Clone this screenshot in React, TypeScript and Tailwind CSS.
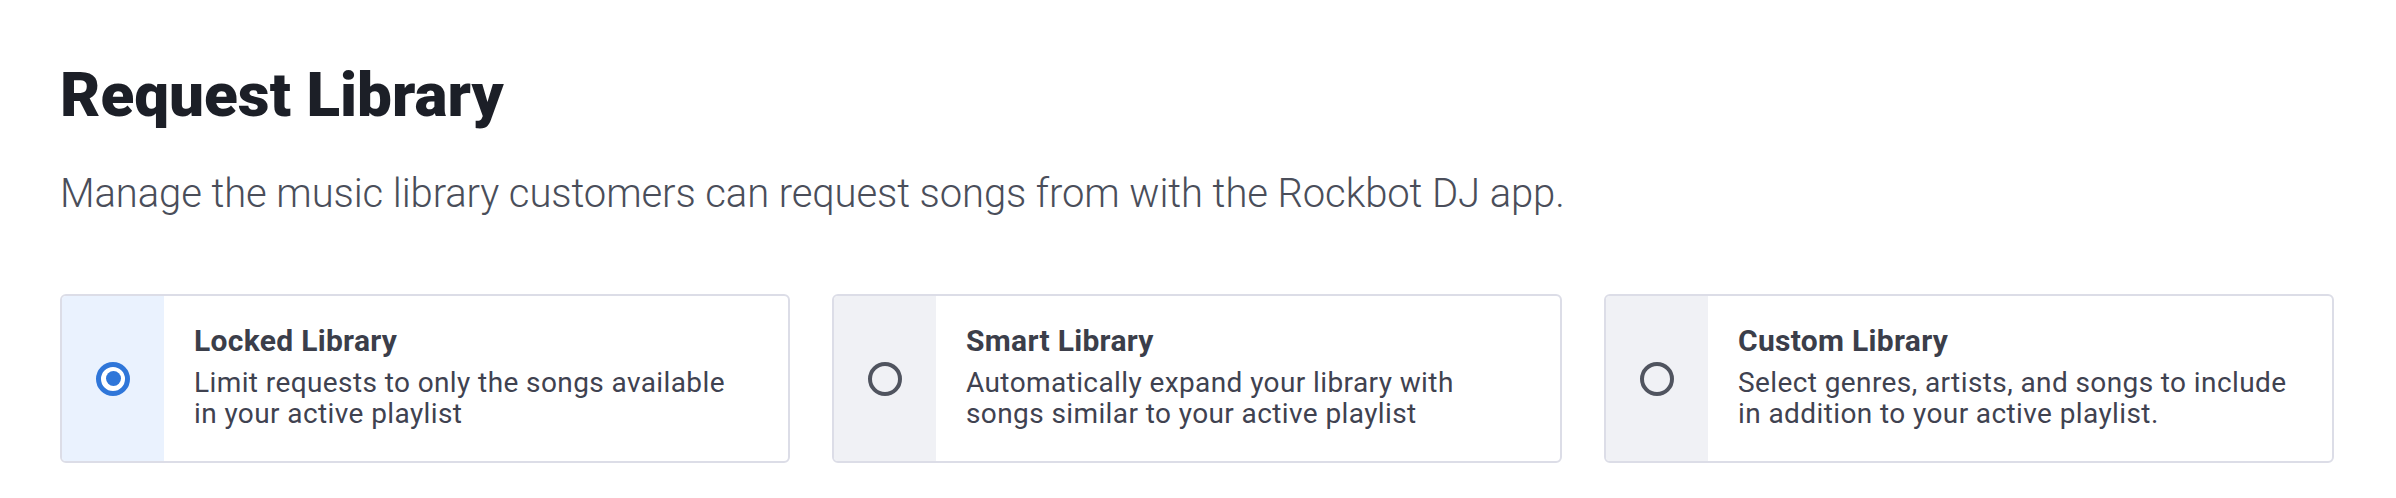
import React, { useState } from "react";

interface LibraryOption {
  key: string;
  title: string;
  lines: string[];
}

const options: LibraryOption[] = [
  {
    key: "locked",
    title: "Locked Library",
    lines: ["Limit requests to only the songs available", "in your active playlist"],
  },
  {
    key: "smart",
    title: "Smart Library",
    lines: ["Automatically expand your library with", "songs similar to your active playlist"],
  },
  {
    key: "custom",
    title: "Custom Library",
    lines: ["Select genres, artists, and songs to include", "in addition to your active playlist."],
  },
];

function Radio({ checked }: { checked: boolean }) {
  if (checked) {
    return (
      <span className="flex h-[34px] w-[34px] items-center justify-center rounded-full border-[5px] border-[#2f76d9] bg-white">
        <span className="h-[15px] w-[15px] rounded-full bg-[#2f76d9]" />
      </span>
    );
  }
  return <span className="h-[34px] w-[34px] rounded-full border-[4px] border-[#50545f]" />;
}

export default function App() {
  const [selected, setSelected] = useState("locked");

  return (
    <div className="min-h-screen bg-white pt-[64px] pl-[60px] pr-[62px] font-['Roboto',sans-serif]">
      <h1 className="text-[62px] leading-[62px] font-black text-[#1c1f27]">
        Request Library
      </h1>
      <p className="mt-[48px] text-[40px] leading-[40px] font-light tracking-[-0.1px] text-[#4a4e5a]">
        Manage the music library customers can request songs from with the Rockbot DJ app.
      </p>

      <div className="mt-[80px] grid grid-cols-3 gap-[42px]">
        {options.map((o) => {
          const isActive = selected === o.key;
          return (
            <button
              key={o.key}
              type="button"
              onClick={() => setSelected(o.key)}
              className="flex h-[169px] overflow-hidden rounded-md border-2 border-[#dcdde7] bg-white text-left"
            >
              <div
                className={
                  isActive
                    ? "flex w-[102px] shrink-0 items-center justify-center bg-[#eaf2fe]"
                    : "flex w-[102px] shrink-0 items-center justify-center bg-[#f0f1f5]"
                }
              >
                <Radio checked={isActive} />
              </div>
              <div className="flex flex-1 flex-col justify-center pb-[5px] pl-[30px] pr-[20px]">
                <div className="text-[30px] leading-[34px] font-bold tracking-[0.3px] text-[#3b3e4a]">
                  {o.title}
                </div>
                <div className="mt-[9px] text-[28px] leading-[31px] tracking-[0.4px] text-[#3f4250]">
                  {o.lines.map((l) => (
                    <span key={l} className="block whitespace-nowrap">
                      {l}
                    </span>
                  ))}
                </div>
              </div>
            </button>
          );
        })}
      </div>
    </div>
  );
}
